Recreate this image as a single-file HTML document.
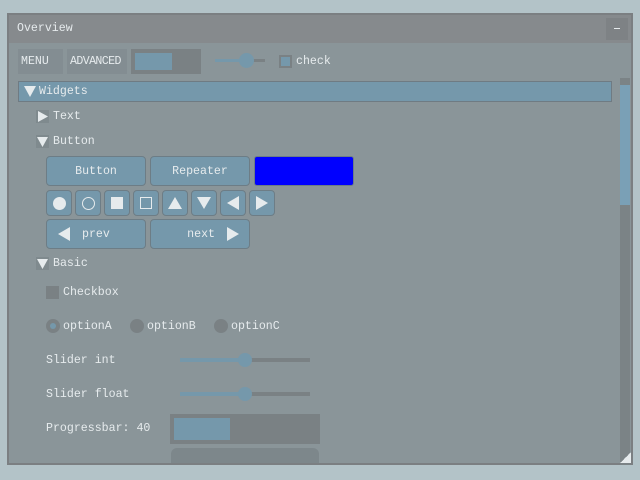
<!DOCTYPE html>
<html><head><meta charset="utf-8"><style>
*{margin:0;padding:0;box-sizing:border-box}
body{width:640px;height:480px;background:#b3c3c8;position:relative;overflow:hidden;font-family:"Liberation Mono","DejaVu Sans Mono",monospace;font-size:11.6px;color:#e6ebed}
.a{position:absolute}
.t{position:absolute;line-height:14px;white-space:nowrap;margin-top:1px}
.btn{position:absolute;background:#7598ab;border:1px solid #6d7d86;border-radius:4px;display:flex;align-items:center;justify-content:center}
.tri{position:absolute;width:13px;height:13px;background:#7f8a8e}
.tri svg{position:absolute;left:1px;top:1px}
</style></head><body>
<div class="a" style="left:7px;top:13px;width:626px;height:452px;background:#7b7f82"></div>
<div class="a" style="left:9px;top:15px;width:622px;height:28px;background:#868a8d"></div>
<div class="a" style="left:9px;top:43px;width:622px;height:420px;background:#8a9599"></div>
<div class="t" style="left:17px;top:21px">Overview</div>
<div class="a" style="left:606px;top:18px;width:22px;height:22px;background:#7e8285"></div>
<div class="a" style="left:614px;top:28px;width:6px;height:1px;background:#e6ebed"></div>

<div class="a" style="left:18px;top:49px;width:45px;height:25px;background:#838d92"></div>
<div class="t" style="left:21px;top:54px">MENU</div>
<div class="a" style="left:67px;top:49px;width:60px;height:25px;background:#838d92"></div>
<div class="t" style="left:70px;top:54px;letter-spacing:-0.6px">ADVANCED</div>
<div class="a" style="left:131px;top:49px;width:70px;height:25px;background:#7a8184"></div>
<div class="a" style="left:135px;top:53px;width:37px;height:17px;background:#7598ab"></div>
<div class="a" style="left:215px;top:59px;width:50px;height:3px;background:#7a8184"></div>
<div class="a" style="left:215px;top:59px;width:30px;height:3px;background:#7598ab"></div>
<div class="a" style="left:239px;top:53px;width:15px;height:15px;border-radius:50%;background:#7598ab"></div>
<div class="a" style="left:279px;top:55px;width:13px;height:13px;background:#7a8184"></div>
<div class="a" style="left:281px;top:57px;width:9px;height:9px;background:#7598ab"></div>
<div class="t" style="left:296px;top:54px">check</div>

<div class="a" style="left:18px;top:81px;width:594px;height:21px;background:#7598ab;border:1px solid #6f7b83"></div>
<div class="a" style="left:24px;top:85px"><svg width="12" height="12"><path d="M0 1H12L6 12Z" fill="#e6ebed"/></svg></div>
<div class="t" style="left:39px;top:84px">Widgets</div>

<div class="a" style="left:620px;top:78px;width:10px;height:387px;background:#7b8386"></div>
<div class="a" style="left:620px;top:85px;width:10px;height:120px;background:#7aa0b6"></div>
<div class="a" style="left:620px;top:452px;width:11px;height:11px;background:linear-gradient(135deg,transparent 50%,#e6ebed 50%)"></div>

<div class="tri" style="left:36px;top:110px"><svg width="11" height="11"><path d="M1 0V11L11 5.5Z" fill="#e6ebed"/></svg></div><div class="t" style="left:53px;top:109px">Text</div>
<div class="tri" style="left:36px;top:135px"><svg width="11" height="11"><path d="M0 1H11L5.5 11Z" fill="#e6ebed"/></svg></div><div class="t" style="left:53px;top:134px">Button</div>

<div class="btn" style="left:46px;top:156px;width:100px;height:30px">Button</div>
<div class="btn" style="left:150px;top:156px;width:100px;height:30px">Repeater</div>
<div class="a" style="left:254px;top:156px;width:100px;height:30px;background:#0000ff;border:1px solid #6d7d86;border-radius:3px"></div>

<div class="btn" style="left:46px;top:190px;width:26px;height:26px"><div style="width:13px;height:13px;border-radius:50%;background:#e6ebed"></div></div>
<div class="btn" style="left:75px;top:190px;width:26px;height:26px"><div style="width:13px;height:13px;border-radius:50%;border:1px solid #e6ebed"></div></div>
<div class="btn" style="left:104px;top:190px;width:26px;height:26px"><div style="width:12px;height:12px;background:#e6ebed"></div></div>
<div class="btn" style="left:133px;top:190px;width:26px;height:26px"><div style="width:12px;height:12px;border:1px solid #e6ebed"></div></div>
<div class="btn" style="left:162px;top:190px;width:26px;height:26px"><svg width="14" height="12"><path d="M7 0L14 12H0Z" fill="#e6ebed"/></svg></div>
<div class="btn" style="left:191px;top:190px;width:26px;height:26px"><svg width="14" height="12"><path d="M0 0H14L7 12Z" fill="#e6ebed"/></svg></div>
<div class="btn" style="left:220px;top:190px;width:26px;height:26px"><svg width="12" height="14"><path d="M12 0V14L0 7Z" fill="#e6ebed"/></svg></div>
<div class="btn" style="left:249px;top:190px;width:26px;height:26px"><svg width="12" height="14"><path d="M0 0V14L12 7Z" fill="#e6ebed"/></svg></div>

<div class="btn" style="left:46px;top:219px;width:100px;height:30px;justify-content:flex-start"><svg style="margin-left:11px" width="12" height="14"><path d="M12 0V14L0 7Z" fill="#e6ebed"/></svg><span style="margin-left:12px">prev</span></div>
<div class="btn" style="left:150px;top:219px;width:100px;height:30px;justify-content:flex-end"><span style="margin-right:12px">next</span><svg style="margin-right:10px" width="12" height="14"><path d="M0 0V14L12 7Z" fill="#e6ebed"/></svg></div>

<div class="tri" style="left:36px;top:257px"><svg width="11" height="11"><path d="M0 1H11L5.5 11Z" fill="#e6ebed"/></svg></div><div class="t" style="left:53px;top:256px">Basic</div>
<div class="a" style="left:46px;top:286px;width:13px;height:13px;background:#7a8184"></div>
<div class="t" style="left:63px;top:285px">Checkbox</div>

<div class="a" style="left:46px;top:319px;width:14px;height:14px;border-radius:50%;background:#7a8184"></div>
<div class="a" style="left:50px;top:323px;width:6px;height:6px;border-radius:50%;background:#7598ab"></div>
<div class="t" style="left:63px;top:319px">optionA</div>
<div class="a" style="left:130px;top:319px;width:14px;height:14px;border-radius:50%;background:#7a8184"></div>
<div class="t" style="left:147px;top:319px">optionB</div>
<div class="a" style="left:214px;top:319px;width:14px;height:14px;border-radius:50%;background:#7a8184"></div>
<div class="t" style="left:231px;top:319px">optionC</div>

<div class="t" style="left:46px;top:353px">Slider int</div>
<div class="a" style="left:180px;top:358px;width:130px;height:4px;background:#7a8184"></div>
<div class="a" style="left:180px;top:358px;width:65px;height:4px;background:#7598ab"></div>
<div class="a" style="left:238px;top:353px;width:14px;height:14px;border-radius:50%;background:#7598ab"></div>

<div class="t" style="left:46px;top:387px">Slider float</div>
<div class="a" style="left:180px;top:392px;width:130px;height:4px;background:#7a8184"></div>
<div class="a" style="left:180px;top:392px;width:65px;height:4px;background:#7598ab"></div>
<div class="a" style="left:238px;top:387px;width:14px;height:14px;border-radius:50%;background:#7598ab"></div>

<div class="t" style="left:46px;top:421px">Progressbar: 40</div>
<div class="a" style="left:170px;top:414px;width:150px;height:30px;background:#7a8184"></div>
<div class="a" style="left:174px;top:418px;width:56px;height:22px;background:#7598ab"></div>
<div class="a" style="left:171px;top:448px;width:148px;height:15px;border-radius:6px 6px 0 0;background:#7d878b"></div>
</body></html>
